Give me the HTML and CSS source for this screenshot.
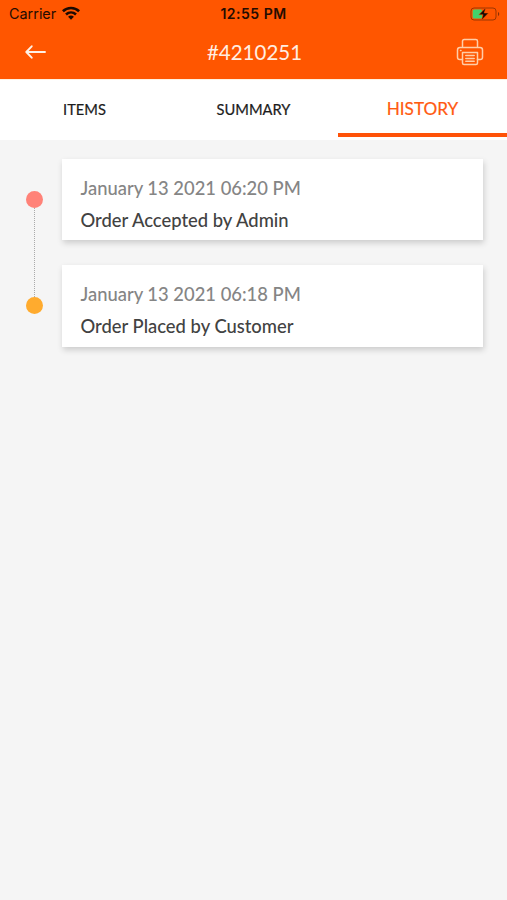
FILE: index.html
```
<!DOCTYPE html>
<html lang="en">
<head>
<meta charset="utf-8">
<title>Order #4210251</title>
<link rel="stylesheet" href="styles.css">
</head>
<body>
<header class="header">
  <div class="status">
    <div class="status-left">
      <span class="carrier">Carrier</span>
      <svg class="wifi" viewBox="0 0 18 14" width="18" height="14"><g fill="none" stroke="#1c0a02" stroke-width="2.6"><path d="M.9 5.2C5.4.9 12.6.9 17.1 5.2"/><path d="M4 8.5c2.9-2.7 7.1-2.7 10 0"/></g><path d="M6.1 10.7c1.7-1.5 4.1-1.5 5.8 0L9 13.7z" fill="#1c0a02"/></svg>
    </div>
    <span class="clock">12:55 PM</span>
    <svg class="battery" viewBox="0 0 30 14" width="30" height="14"><rect x="1" y="1" width="25" height="12" rx="3" fill="none" stroke="#9c3603"/><rect x="2.7" y="2.6" width="9.500" height="8.8" rx="1.5" fill="#42d36b"/><path d="M28 5v4c1.7-.6 1.7-3.4 0-4z" fill="#8c3002"/><path d="M15.8.8 8.8 7.7h4.3l-1.7 5.6L18.5 6h-4.3z" fill="#160903" stroke="#ff5600" stroke-width=".5"/></svg>
  </div>
  <div class="navbar">
    <svg class="back" viewBox="0 0 22 16" width="22" height="16"><path d="M20 8H1.5M6.700 2.300 1.3 8l5.400 5.700" fill="none" stroke="#fff1e5" stroke-width="1.9" stroke-linecap="round" stroke-linejoin="round"/></svg>
    <h1 class="title">#4210251</h1>
    <svg class="printer" viewBox="0 0 28 28" width="28" height="28"><g fill="none" stroke="#ffcda8" stroke-width="1.5" stroke-linejoin="round" stroke-linecap="round"><path d="M6.5 8.5V3.2q0-1.7 1.7-1.7h11.6q1.7 0 1.7 1.7v5.3"/><path d="M6.5 21.5H3.8Q1.5 21.5 1.5 19.2V12Q1.5 9.5 4 9.5H24Q26.5 9.5 26.5 12V19.2Q26.5 21.5 24.2 21.5H21.5"/><path d="M6.500 14.500H21.500V25Q21.500 26.500 20 26.500H8Q6.500 26.500 6.500 25Z"/><path d="M9.8 17.500h8.4M9.8 20.400h8.4M9.8 23.300h8.4M4.500 12.500h.5"/></g></svg>
  </div>
</header>
<nav class="tabs">
  <a class="tab">ITEMS</a>
  <a class="tab">SUMMARY</a>
  <a class="tab tab-active">HISTORY</a>
</nav>
<main class="timeline">
  <div class="rail">
    <span class="dot dot-accepted"></span>
    <span class="line"></span>
    <span class="dot dot-placed"></span>
  </div>
  <div class="events">
    <article class="card">
      <time class="date">January 13 2021 06:20 PM</time>
      <p class="event">Order Accepted by Admin</p>
    </article>
    <article class="card">
      <time class="date">January 13 2021 06:18 PM</time>
      <p class="event">Order Placed by Customer</p>
    </article>
  </div>
</main>
</body>
</html>
```
FILE: styles.css
```
* { box-sizing: border-box; }
body { margin: 0; min-height: 900px; background: #f5f5f5; font-family: Lato, sans-serif; }
h1, p { margin: 0; font-weight: 400; }
svg { display: block; }
.header { height: 79px; background: #ff5600; }
.status { display: grid; grid-template-columns: 1fr auto 1fr; align-items: center; height: 27px; padding: 0 7px; font-family: Inter, sans-serif; color: #240c02; }
.status-left { display: flex; align-items: center; gap: 6px; padding-left: 2px; }
.carrier { font-size: 14.4px; }
.wifi { margin-top: -2px; }
.clock { font-size: 14px; font-weight: 600; letter-spacing: .5px; }
.battery { justify-self: end; }
.navbar { display: grid; grid-template-columns: 1fr auto 1fr; align-items: center; height: 50px; padding: 0 23px 0 25px; }
.title { font-size: 20.5px; line-height: 26px; color: #ffeee2; }
.printer { justify-self: end; }
.tabs { display: grid; grid-template-columns: repeat(3, 1fr); height: 61px; background: #fff; border-top: 1px solid #fff1df; }
.tab { display: flex; align-items: center; justify-content: center; height: 57px; font-size: 14.7px; color: #1c1c1c; -webkit-text-stroke: .2px; }
.tab-active { padding-top: 3px; font-size: 17.2px; color: #ff5a10; border-bottom: 4px solid #ff5208; }
.timeline { display: flex; padding: 19px 24.5px 0 26px; }
.rail { display: flex; flex-direction: column; align-items: center; width: 17px; margin-right: 19px; padding-top: 32px; }
.dot { width: 17px; height: 17px; border-radius: 50%; }
.dot-accepted { background: #ff8278; }
.dot-placed { background: #ffab2e; }
.line { height: 89px; border-left: 1px dotted #aaa; }
.events { flex: 1; display: flex; flex-direction: column; gap: 25px; }
.card { height: 81.3px; padding: 17px 18.5px 0; background: #fff; box-shadow: 1px 3px 6px rgba(0, 0, 0, .17); }
.date, .event { display: block; font-size: 18.4px; line-height: 24px; font-weight: 500; white-space: nowrap; }
.date { color: #858585; }
.event { margin-top: 8px; color: #424242; }
```
